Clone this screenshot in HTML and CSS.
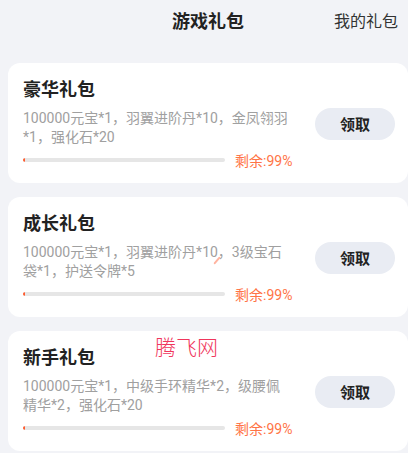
FILE: index.html
```html
<!DOCTYPE html>
<html lang="zh-CN">
<head>
  <meta charset="UTF-8" />
  <meta name="viewport" content="width=device-width, initial-scale=1.0" />
  <title>游戏礼包</title>
  <link rel="stylesheet" href="styles.css">
</head>
<body>
  <div class="page">
    <header class="topbar">
      <span></span>
      <h1 class="topbar-title">游戏礼包</h1>
      <a class="topbar-link" href="#">我的礼包</a>
    </header>

    <div class="list">
      <div class="card">
        <div class="card-main">
          <h2 class="card-title">豪华礼包</h2>
          <p class="card-desc">100000元宝*1，羽翼进阶丹*10，金凤翎羽*1，强化石*20</p>
          <div class="progress-row">
            <div class="progress"><div class="progress-fill" style="width: 1%"></div></div>
            <span class="remain">剩余:99%</span>
          </div>
        </div>
        <button class="btn">领取</button>
      </div>

      <div class="card">
        <div class="card-main">
          <h2 class="card-title">成长礼包</h2>
          <p class="card-desc">100000元宝*1，羽翼进阶丹*10，3级宝石袋*1，护送令牌*5</p>
          <div class="progress-row">
            <div class="progress"><div class="progress-fill" style="width: 1%"></div></div>
            <span class="remain">剩余:99%</span>
          </div>
        </div>
        <button class="btn">领取</button>
      </div>

      <div class="card">
        <div class="card-main">
          <h2 class="card-title">新手礼包</h2>
          <p class="card-desc">100000元宝*1，中级手环精华*2，级腰佩精华*2，强化石*20</p>
          <div class="progress-row">
            <div class="progress"><div class="progress-fill" style="width: 1%"></div></div>
            <span class="remain">剩余:99%</span>
          </div>
        </div>
        <button class="btn">领取</button>
      </div>
    </div>

    <span class="mark-stroke"></span>
    <span class="watermark">腾飞网</span>
  </div>
</body>
</html>
```

FILE: styles.css
```css
body { margin: 0; background: #f2f3f7; font-family: Roboto, "Noto Sans CJK SC", sans-serif; overflow: hidden; }
.page { position: relative; width: 400px; padding-left: 8px; }

.topbar { display: grid; grid-template-columns: 1fr auto 1fr; align-items: center; height: 40px; }
.topbar-title { margin: 0; font-size: 18px; font-weight: bold; color: #222; }
.topbar-link { justify-self: end; margin-right: 10px; font-size: 16px; color: #333; text-decoration: none; }

.list { display: flex; flex-direction: column; gap: 14px; padding-top: 23px; }
.card { display: flex; align-items: center; background: #fff; border-radius: 12px; padding: 15px 13px 14px 15px; }
.card-main { flex: 1; min-width: 0; }
.card-title { margin: 0; font-size: 18px; line-height: 24px; font-weight: bold; color: #222; }
.card-desc { margin: 7px 0 0; width: 266px; font-size: 14px; line-height: 19px; color: #a0a0a0; }

.progress-row { display: flex; align-items: center; gap: 10px; margin-top: 4px; height: 18px; }
.progress { width: 202px; height: 4px; background: #e6e6e6; border-radius: 2px; overflow: hidden; }
.progress-fill { height: 100%; background: #ff5b2e; border-radius: 2px; }
.remain { font-size: 14px; color: #ff7446; }

.btn { width: 80px; height: 32px; border: none; border-radius: 16px; background: #e9ecf3; color: #222; font-family: inherit; font-size: 15px; font-weight: bold; cursor: pointer; }

.watermark { position: absolute; left: 155px; top: 331px; font-size: 21px; font-weight: 300; color: #f0365c; }
.mark-stroke { position: absolute; left: 216px; top: 256px; width: 2px; height: 9px; background: #ffb4a0; border-radius: 1px; transform: rotate(40deg); }
```
